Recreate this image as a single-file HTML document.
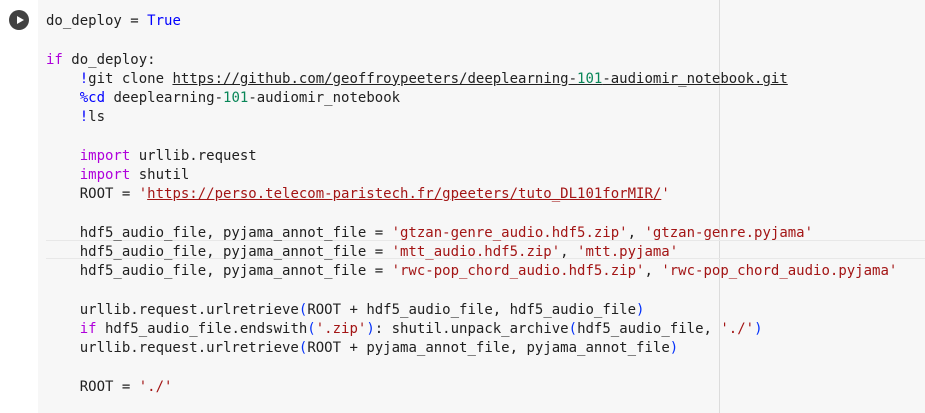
<!DOCTYPE html>
<html><head><style>
body{margin:0;width:925px;height:413px;background:#fff;overflow:hidden;position:relative;font-family:"DejaVu Sans Mono","Liberation Mono",monospace;}
.cell{position:absolute;left:38px;top:0;width:887px;height:413px;background:#f7f7f7;}
.ruler{position:absolute;left:719px;top:0;width:1px;height:413px;background:#dcdcdc;}
.cur{position:absolute;left:46px;top:240px;width:879px;height:17px;border-top:1px solid #e8e8e8;border-bottom:1px solid #e8e8e8;}
pre{position:absolute;left:46px;top:12px;margin:0;font-family:inherit;font-size:14px;line-height:19.25px;color:#212121;}
.k{color:#af00db}.b{color:#0000ff}.s{color:#a31515}.n{color:#098658}.p{color:#0431fa}.u{text-decoration:underline}
.run{position:absolute;left:9px;top:10px;width:20px;height:20px;border-radius:50%;background:#424242;}
.run:after{content:"";position:absolute;left:8px;top:5.5px;border-left:7px solid #fff;border-top:4.5px solid transparent;border-bottom:4.5px solid transparent;}
</style></head><body>
<div class="cell"></div><div class="ruler"></div><div class="cur"></div>
<div class="run"></div>
<pre>do_deploy = <span class="b">True</span>

<span class="k">if</span> do_deploy:
    <span class="b">!</span>git clone <span class="u">https://github.com/geoffroypeeters/deeplearning-<span class="n">101</span>-audiomir_notebook.git</span>
    <span class="b">%cd</span> deeplearning-<span class="n">101</span>-audiomir_notebook
    <span class="b">!</span>ls

    <span class="k">import</span> urllib.request
    <span class="k">import</span> shutil
    ROOT = <span class="s">'<span class="u">https://perso.telecom-paristech.fr/gpeeters/tuto_DL101forMIR/</span>'</span>

    hdf5_audio_file, pyjama_annot_file = <span class="s">'gtzan-genre_audio.hdf5.zip'</span>, <span class="s">'gtzan-genre.pyjama'</span>
    hdf5_audio_file, pyjama_annot_file = <span class="s">'mtt_audio.hdf5.zip'</span>, <span class="s">'mtt.pyjama'</span>
    hdf5_audio_file, pyjama_annot_file = <span class="s">'rwc-pop_chord_audio.hdf5.zip'</span>, <span class="s">'rwc-pop_chord_audio.pyjama'</span>

    urllib.request.urlretrieve<span class="p">(</span>ROOT + hdf5_audio_file, hdf5_audio_file<span class="p">)</span>
    <span class="k">if</span> hdf5_audio_file.endswith<span class="p">(</span><span class="s">'.zip'</span><span class="p">)</span>: shutil.unpack_archive<span class="p">(</span>hdf5_audio_file, <span class="s">'./'</span><span class="p">)</span>
    urllib.request.urlretrieve<span class="p">(</span>ROOT + pyjama_annot_file, pyjama_annot_file<span class="p">)</span>

    ROOT = <span class="s">'./'</span>
</pre>
</body></html>
